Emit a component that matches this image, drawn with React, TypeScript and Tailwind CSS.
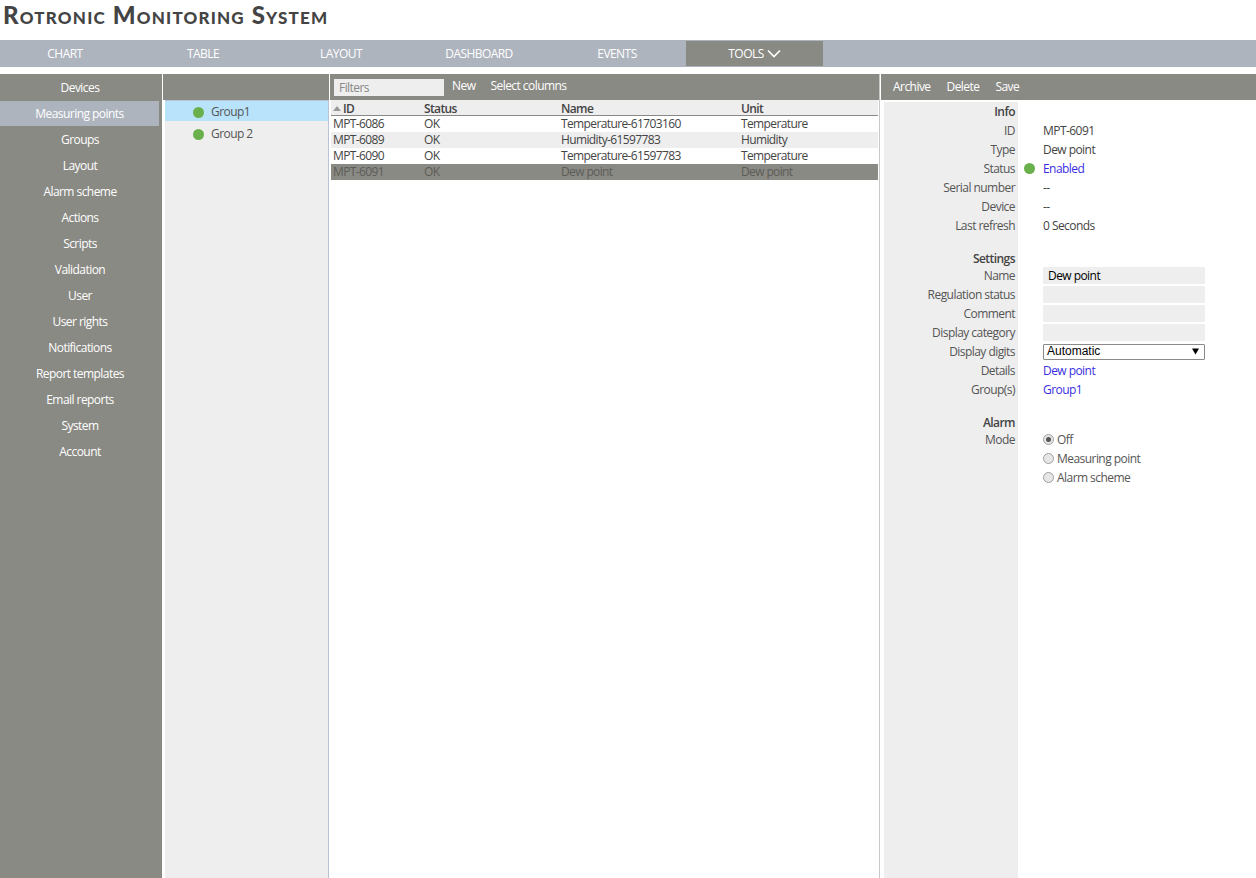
import type { ReactNode } from 'react';

const sideItems = ['Devices', 'Measuring points', 'Groups', 'Layout', 'Alarm scheme', 'Actions', 'Scripts', 'Validation', 'User', 'User rights', 'Notifications', 'Report templates', 'Email reports', 'System', 'Account'];
const tabs = ['CHART', 'TABLE', 'LAYOUT', 'DASHBOARD', 'EVENTS'];
const rows = [
  ['MPT-6086', 'OK', 'Temperature-61703160', 'Temperature'],
  ['MPT-6089', 'OK', 'Humidity-61597783', 'Humidity'],
  ['MPT-6090', 'OK', 'Temperature-61597783', 'Temperature'],
  ['MPT-6091', 'OK', 'Dew point', 'Dew point'],
];

function Dot() {
  return <span className="block w-[11px] h-[11px] rounded-full bg-[#6ab04c]" />;
}

function Row({ label, bold, children, h = 'h-[19px]' }: { label: string; bold?: boolean; children?: ReactNode; h?: string }) {
  return (
    <div className={`flex ${h} items-center`}>
      <div className={`w-[134px] shrink-0 pr-[3px] text-right ${bold ? 'font-semibold text-[#444]' : 'text-[#555]'}`}>{label}</div>
      <div className="flex-1 flex items-center min-w-0">{children}</div>
    </div>
  );
}

function Field({ value }: { value?: string }) {
  return <div className="ml-[25px] w-[162px] h-[17px] bg-[#eeeeee] pl-[5px] leading-[17px] text-black">{value}</div>;
}

function Value({ children, link }: { children: ReactNode; link?: boolean }) {
  return <span className={`ml-[25px] ${link ? 'text-[#3a2fe0]' : 'text-[#444]'}`}>{children}</span>;
}

function Radio({ label, checked }: { label: string; checked?: boolean }) {
  return (
    <div className="flex h-[19px] items-center pl-[159px] text-[#555]">
      <span className="flex items-center justify-center w-[11px] h-[11px] rounded-full border border-[#a0a0a0] bg-[#e6e6e6] mr-[3px]">
        {checked && <span className="block w-[5px] h-[5px] rounded-full bg-[#555]" />}
      </span>
      {label}
    </div>
  );
}

export default function App() {
  return (
    <div className="w-[1256px] h-[878px] overflow-hidden bg-white text-[12px] text-[#444] flex flex-col font-['Open_Sans','Noto_Sans',sans-serif] tracking-[-0.55px]">
      <div className="h-[40px] pl-[3px] pt-[1px] text-[24px] leading-[28px] font-black text-[#444] tracking-[1.18px] font-['Lato','Liberation_Sans',sans-serif] [font-variant:small-caps]">
        Rotronic Monitoring System
      </div>
      <div className="h-[27px] bg-[#aeb4be] flex text-white">
        <div className="flex -ml-[4px]">
          {tabs.map(t => (
            <div key={t} className="w-[138px] h-[27px] flex items-center justify-center">{t}</div>
          ))}
          <div className="w-[137px] h-[25px] mt-px flex items-center justify-center gap-[3px] bg-[#8a8a84]">
            TOOLS
            <svg width="14" height="9" viewBox="0 0 14 9" fill="none" stroke="white" strokeWidth="1.6"><path d="M1 1.5 L7 7.5 L13 1.5" /></svg>
          </div>
        </div>
      </div>
      <div className="flex flex-1 mt-[7px] min-h-0">
        <div className="w-[162px] bg-[#8a8a84] text-white pt-px shrink-0">
          {sideItems.map((s, i) => (
            <div key={s} className={`flex items-center justify-center ${i === 1 ? 'w-[159px] bg-[#aeb4be] h-[25px] mb-px' : 'w-[160px] h-[26px]'}`}>{s}</div>
          ))}
        </div>
        <div className="w-[166px] ml-px shrink-0 flex flex-col">
          <div className="h-[26px] bg-[#8a8a84]" />
          <div className="flex-1 bg-[#eeeeee] ml-[2px] border-t border-r border-[#b9c3d6]">
            <div className="h-[20px] pt-[2px] bg-[#b9e3fb] flex items-center pl-[28px] gap-[7px] text-[#555]"><Dot />Group1</div>
            <div className="h-[22px] pt-[2px] mt-px flex items-center pl-[28px] gap-[7px] text-[#555]"><Dot />Group 2</div>
          </div>
        </div>
        <div className="w-[551px] shrink-0 border-r border-[#c8c8c8] flex flex-col">
          <div className="h-[26px] bg-[#8a8a84] ml-px flex items-center text-white">
            <div className="ml-[4px] w-[110px] h-[17px] bg-[#eeeeee] text-[#888] pl-[5px] leading-[18px]">Filters</div>
            <span className="ml-[8px] -mt-[2px]">New</span>
            <span className="ml-[15px] -mt-[2px]">Select columns</span>
          </div>
          <div className="flex-1 pl-[2px] pr-px tracking-[-0.62px]">
            <div className="grid grid-cols-[91px_137px_180px_1fr] h-[15px] bg-[#eeeeee] border-b border-[#888] font-semibold text-[#444] leading-[17px] box-content">
              <div className="pl-[2px] flex items-center gap-[2px]">
                <span className="block w-0 h-0 border-l-[4px] border-r-[4px] border-b-[5px] border-l-transparent border-r-transparent border-b-[#999]" />ID
              </div>
              <div className="pl-[2px]">Status</div>
              <div className="pl-[2px]">Name</div>
              <div className="pl-[2px]">Unit</div>
            </div>
            {rows.map((r, i) => (
              <div key={r[0]} className={`grid grid-cols-[91px_137px_180px_1fr] h-[16px] leading-[16px] ${i === 3 ? 'bg-[#8a8a84] text-[#5c5c58]' : i === 1 ? 'bg-[#eeeeee]' : 'bg-white'}`}>
                {r.map((c, j) => <div key={j} className="pl-[2px]">{c}</div>)}
              </div>
            ))}
          </div>
        </div>
        <div className="flex-1 ml-px flex flex-col min-w-0">
          <div className="h-[26px] bg-[#8a8a84] flex items-center pl-[12px] gap-[16px] text-white">
            <span>Archive</span><span>Delete</span><span>Save</span>
          </div>
          <div className="flex-1 relative pl-[3px] pt-[2px]">
            <div className="absolute left-[3px] top-[2px] bottom-0 w-[134px] bg-[#eeeeee]" />
            <div className="relative">
              <Row label="Info" bold><span /></Row>
              <Row label="ID"><Value>MPT-6091</Value></Row>
              <Row label="Type"><Value>Dew point</Value></Row>
              <Row label="Status">
                <span className="ml-[6px] mr-[8px]"><Dot /></span><span className="text-[#3a2fe0]">Enabled</span>
              </Row>
              <Row label="Serial number"><Value>--</Value></Row>
              <Row label="Device"><Value>--</Value></Row>
              <Row label="Last refresh"><Value>0 Seconds</Value></Row>
              <div className="h-[16px]" />
              <Row label="Settings" bold h="h-[15px]"><span /></Row>
              <Row label="Name"><Field value="Dew point" /></Row>
              <Row label="Regulation status"><Field /></Row>
              <Row label="Comment"><Field /></Row>
              <Row label="Display category"><Field /></Row>
              <Row label="Display digits">
                <div className="ml-[25px] w-[162px] h-[16px] border border-[#8a8a8a] rounded-[1px] bg-white flex items-center justify-between pl-[3px] pr-[5px] pb-px text-black font-['Liberation_Sans',sans-serif] tracking-normal">
                  Automatic
                  <svg width="7" height="7" viewBox="0 0 7 7" fill="black"><path d="M0 0.5 H7 L3.5 6.5 Z" /></svg>
                </div>
              </Row>
              <Row label="Details"><Value link>Dew point</Value></Row>
              <Row label="Group(s)"><Value link>Group1</Value></Row>
              <div className="h-[16px]" />
              <Row label="Alarm" bold h="h-[15px]"><span /></Row>
              <div className="relative">
                <div className="absolute left-0 top-0 w-[134px] pr-[3px] h-[19px] leading-[19px] text-right text-[#555]">Mode</div>
                <Radio label="Off" checked />
                <Radio label="Measuring point" />
                <Radio label="Alarm scheme" />
              </div>
            </div>
          </div>
        </div>
      </div>
    </div>
  );
}
